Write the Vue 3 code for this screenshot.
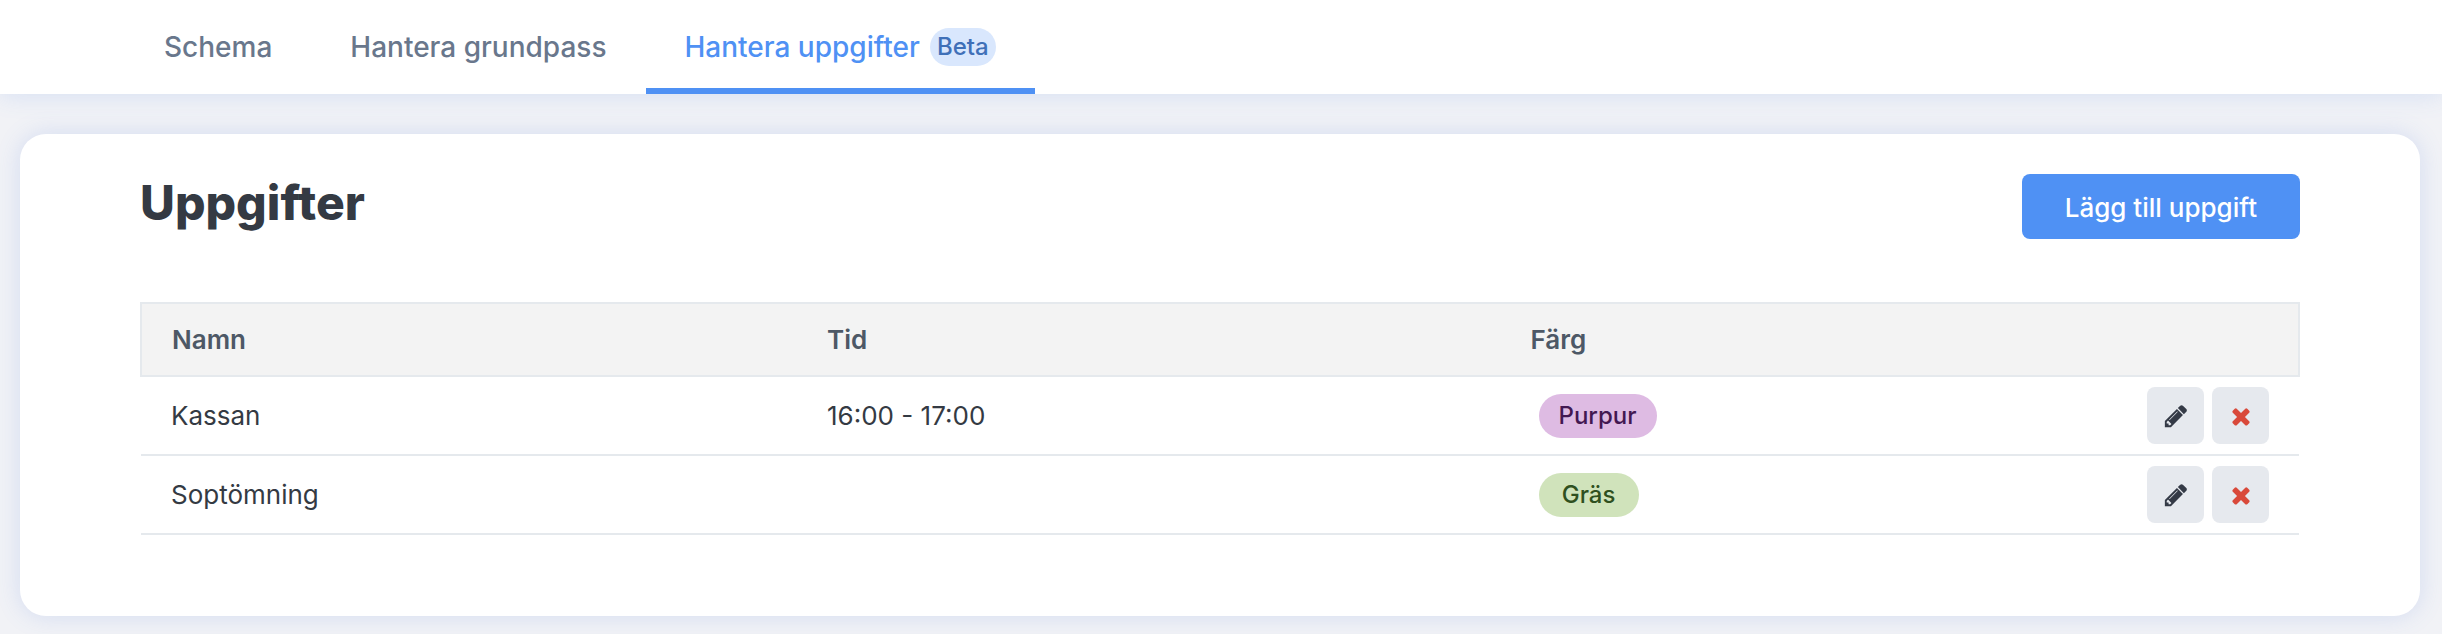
<script setup>
import { ref } from 'vue'

const tabs = [
  { id: 'schema', label: 'Schema' },
  { id: 'base', label: 'Hantera grundpass' },
  { id: 'tasks', label: 'Hantera uppgifter', badge: 'Beta' },
]
const active = ref('tasks')

const tasks = ref([
  { name: 'Kassan', time: '16:00 - 17:00', color: 'Purpur', tone: 'purple' },
  { name: 'Soptömning', time: '', color: 'Gräs', tone: 'grass' },
])
</script>

<template>
  <div class="page">
    <nav class="tabs">
      <a
        v-for="tab in tabs"
        :key="tab.id"
        :href="'#' + tab.id"
        class="tab"
        :class="{ active: tab.id === active }"
        @click.prevent="active = tab.id"
      >
        <span>{{ tab.label }}</span>
        <span v-if="tab.badge" class="badge">{{ tab.badge }}</span>
      </a>
    </nav>

    <main class="card">
      <header class="card-head">
        <h1>Uppgifter</h1>
        <button type="button" class="primary">Lägg till uppgift</button>
      </header>

      <table>
        <colgroup>
          <col class="c-name" />
          <col class="c-time" />
          <col class="c-color" />
          <col class="c-actions" />
        </colgroup>
        <thead>
          <tr>
            <th scope="col">Namn</th>
            <th scope="col">Tid</th>
            <th scope="col">Färg</th>
            <td></td>
          </tr>
        </thead>
        <tbody>
          <tr v-for="task in tasks" :key="task.name">
            <td>{{ task.name }}</td>
            <td>{{ task.time }}</td>
            <td><span class="pill" :class="task.tone">{{ task.color }}</span></td>
            <td>
              <div class="actions">
                <button type="button" class="icon" :aria-label="'Redigera ' + task.name">
                  <svg viewBox="0 0 1792 1792" aria-hidden="true">
                    <path d="M491 1536l91-91-235-235-91 91v107h128v128h107zm523-928q0-22-22-22-10 0-17 7l-542 542q-7 7-7 17 0 22 22 22 10 0 17-7l542-542q7-7 7-17zm-54-192l416 416-832 832h-416v-416zm683 96q0 53-37 90l-166 166-416-416 166-165q36-38 90-38 53 0 91 38l235 234q37 39 37 91z" />
                  </svg>
                </button>
                <button type="button" class="icon remove" :aria-label="'Ta bort ' + task.name">
                  <svg viewBox="0 0 1792 1792" aria-hidden="true">
                    <path d="M1490 1322q0 40-28 68l-136 136q-28 28-68 28t-68-28l-294-294-294 294q-28 28-68 28t-68-28l-136-136q-28-28-28-68t28-68l294-294-294-294q-28-28-28-68t28-68l136-136q28-28 68-28t68 28l294 294 294-294q28-28 68-28t68 28l136 136q28 28 28 68t-28 68l-294 294 294 294q28 28 28 68z" />
                  </svg>
                </button>
              </div>
            </td>
          </tr>
        </tbody>
      </table>
    </main>
  </div>
</template>

<style>
body {
  margin: 0;
  background: #f1f2f6;
}
</style>

<style scoped>
.page {
  box-sizing: border-box;
  min-height: 100vh;
  padding-bottom: 18px;
  overflow: hidden;
  color: #343a43;
  font-family: Inter, "Liberation Sans", sans-serif;
  font-size: 26px;
}
.tabs {
  display: flex;
  height: 94px;
  padding: 0 125px;
  background: #fff;
  box-shadow: 0 0 24px rgba(78, 132, 240, 0.18);
}
.tab {
  box-sizing: border-box;
  display: flex;
  align-items: center;
  gap: 10px;
  padding: 6px 39px 0;
  border-bottom: 6px solid transparent;
  color: #69778c;
  font-size: 28px;
  font-weight: 500;
  text-decoration: none;
}
.tab.active {
  border-bottom-color: #4f91f4;
  color: #4f91f4;
}
.badge {
  padding: 0 7px;
  border-radius: 19px;
  background: #d9e7fd;
  color: #3f70b8;
  font-size: 24px;
  line-height: 38px;
}
.card {
  margin: 40px 22px 0 20px;
  padding: 40px 120px 81px;
  border-radius: 26px;
  background: #fff;
  box-shadow: 0 0 24px rgba(78, 122, 220, 0.18);
}
.card-head {
  display: flex;
  justify-content: space-between;
  align-items: flex-start;
  margin-bottom: 63px;
}
h1 {
  margin: 0;
  font-size: 48px;
  font-weight: 800;
  line-height: 58px;
}
button {
  border: 0;
  font-family: inherit;
  cursor: pointer;
}
.primary {
  padding: 2px 43px 0;
  border-radius: 8px;
  background: #4f91f4;
  color: #fff;
  font-size: 26px;
  font-weight: 500;
  line-height: 63px;
}
table {
  width: 100%;
  table-layout: fixed;
  border-collapse: collapse;
}
.c-name {
  width: 30.4%;
}
.c-time {
  width: 32.6%;
}
.c-color {
  width: 20%;
}
thead tr {
  height: 73px;
  border: 2px solid #e5e9ed;
  background: #f3f3f3;
}
th {
  padding: 0 30px;
  color: #4d5866;
  font-weight: 600;
  text-align: left;
}
tbody tr {
  height: 79px;
  border-bottom: 2px solid #e5e9ed;
}
tbody td {
  padding: 0 30px;
}
.pill {
  display: inline-block;
  box-sizing: border-box;
  min-width: 100px;
  margin-left: 8px;
  padding: 0 20px;
  border-radius: 22px;
  font-size: 24px;
  font-weight: 500;
  line-height: 44px;
  text-align: center;
  vertical-align: middle;
}
.purple {
  background: #debbe3;
  color: #431852;
}
.grass {
  background: #d0e3bb;
  color: #2f5020;
}
.actions {
  display: flex;
  justify-content: flex-end;
  gap: 8px;
}
.icon {
  display: flex;
  align-items: center;
  justify-content: center;
  width: 57px;
  height: 57px;
  padding: 0;
  border-radius: 8px;
  background: #e6e9ee;
  color: #343a46;
}
.remove {
  color: #d9493a;
}
.icon svg {
  width: 26px;
  height: 26px;
  fill: currentColor;
}
</style>
